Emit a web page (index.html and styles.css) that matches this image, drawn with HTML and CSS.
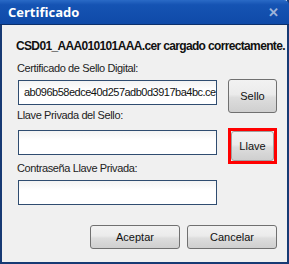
FILE: index.html
```html
<!DOCTYPE html>
<html lang="es">
<head>
    <meta charset="UTF-8">
    <title>Certificado</title>
    <link rel="stylesheet" href="styles.css">
</head>
<body>
    <div class="window">
        <div class="titlebar">
            <span class="title">Certificado</span>
            <span class="close">&#x2715;</span>
        </div>
        <div class="content">
            <div class="message">CSD01_AAA010101AAA.cer cargado correctamente.</div>
            <div class="form">
                <div class="label">Certificado de Sello Digital:</div>
                <div class="field field-1">ab096b58edce40d257adb0d3917ba4bc.cer</div>
                <div class="side side-1"><button class="btn">Sello</button></div>
                <div class="label label-2">Llave Privada del Sello:</div>
                <div class="field field-2"></div>
                <div class="side side-2 highlight"><button class="btn">Llave</button></div>
                <div class="label label-3">Contraseña Llave Privada:</div>
                <div class="field field-3"></div>
            </div>
            <div class="actions">
                <button class="btn action">Aceptar</button>
                <button class="btn action">Cancelar</button>
            </div>
        </div>
    </div>
</body>
</html>
```

FILE: styles.css
```css
html, body {
    margin: 0;
    padding: 0;
    width: 289px;
    height: 264px;
    overflow: hidden;
    font-family: "Liberation Sans", Arial, sans-serif;
}

.window {
    box-sizing: border-box;
    width: 289px;
    height: 264px;
    border: 2px solid #173a74;
    border-top: 0;
    background: #f0f0f0;
    display: flex;
    flex-direction: column;
}

.titlebar {
    height: 24px;
    margin: 0 -2px;
    padding: 0 10px 0 8px;
    display: flex;
    align-items: center;
    justify-content: space-between;
    background: linear-gradient(to bottom, #2a6ac6 0%, #1553b3 20%, #0f4aa8 100%);
    border-bottom: 1px solid #0b2f6b;
    border-top-right-radius: 5px;
}

.title {
    color: #ffffff;
    font-family: "Open Sans", "Liberation Sans", sans-serif;
    font-weight: bold;
    font-size: 13px;
}

.close {
    color: #9db4da;
    font-size: 13px;
    font-weight: bold;
}

.content {
    padding: 14px 0 0 14px;
    flex: 1;
    display: flex;
    flex-direction: column;
}

.message {
    font-weight: bold;
    font-size: 12px;
    line-height: 14px;
    letter-spacing: -0.65px;
    color: #111;
    white-space: nowrap;
}

.form {
    margin-top: 8px;
    display: grid;
    grid-template-columns: 201px 49px;
    column-gap: 11px;
}

.label {
    grid-column: 1;
    font-size: 11px;
    line-height: 14px;
    letter-spacing: -0.38px;
    color: #222;
    margin-left: 1px;
}

.label-2 {
    margin-top: 3px;
}

.label-3 {
    margin-top: 6px;
}

.field {
    grid-column: 1;
    box-sizing: border-box;
    height: 25px;
    margin-top: 5px;
    margin-left: 2px;
    border: 1px solid #2f4c70;
    background: linear-gradient(to bottom, #f2f2f2, #ffffff 40%);
    font-size: 11px;
    line-height: 23px;
    letter-spacing: -0.5px;
    padding-left: 5px;
    white-space: nowrap;
    overflow: hidden;
    color: #111;
}

.field-2 {
    margin-top: 8px;
}

.side {
    grid-column: 2;
    align-self: start;
    display: flex;
}

.side-1 {
    grid-row: 2 / span 2;
    margin-top: 4px;
}

.side-2 {
    grid-row: 4 / span 2;
    margin-top: 6px;
}

.btn {
    box-sizing: border-box;
    width: 49px;
    height: 34px;
    border: 1px solid #707070;
    border-radius: 3px;
    background: linear-gradient(to bottom, #f2f2f2 0%, #ebebeb 45%, #dddddd 55%, #cfcfcf 100%);
    font-family: "Liberation Sans", Arial, sans-serif;
    font-size: 11px;
    color: #111;
    padding: 0;
}

.highlight {
    border: 3px solid #ff0000;
}

.highlight .btn {
    width: 43px;
    height: 30px;
    border-color: #a0a0a0;
}

.actions {
    margin-top: 20px;
    display: flex;
    justify-content: flex-end;
    gap: 7px;
    padding-right: 10px;
}

.action {
    width: 90px;
    height: 24px;
}
```
